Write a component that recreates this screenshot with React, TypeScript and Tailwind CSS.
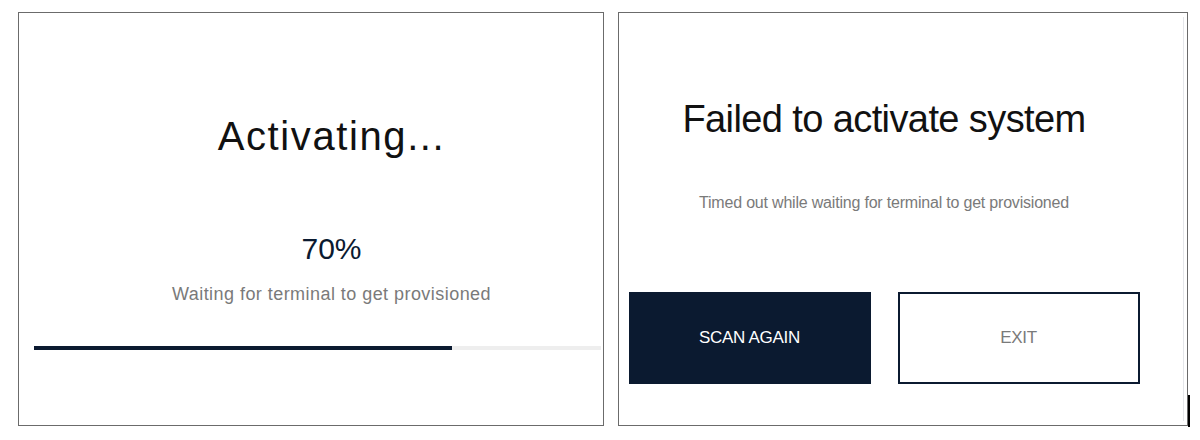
import React from 'react';

const font = { fontFamily: '"Liberation Sans", Arial, sans-serif' };

// Progress screen
const ActivatingPanel: React.FC<{ percent: number; fill: number }> = ({ percent, fill }) => {
  return (
    <div className="w-[586px] h-[414px] border border-[#6b6b6b] bg-white flex flex-col">
      <div className="pl-[41px] flex flex-col items-center">
        <h1 className="mt-[103px] text-[40px] leading-[40px] tracking-[1.6px] text-[#111]">Activating...</h1>
        <div className="mt-[78px] text-[30px] leading-[30px] text-[#0b1a30]">{percent}%</div>
        <p className="mt-[21px] text-[18px] leading-[18px] tracking-[0.45px] text-[#7a7a7a]">
          Waiting for terminal to get provisioned
        </p>
      </div>
      <div className="mt-[43px] ml-[15px] mr-[2px] h-[4px] bg-[#eeeeee] flex">
        <div className="h-full bg-[#0b1a30]" style={{ width: `${fill}%` }} />
      </div>
    </div>
  );
};

// Error screen
const FailedPanel: React.FC = () => {
  return (
    <div className="relative w-[570px] h-[414px] border border-[#6b6b6b] bg-white">
      <div className="pr-[38px] flex flex-col items-center">
        <h1 className="mt-[87px] text-[38px] leading-[38px] tracking-[-0.6px] text-[#111]">Failed to activate system</h1>
        <p className="mt-[57px] text-[16px] leading-[16px] tracking-[-0.2px] text-[#7a7a7a]">
          Timed out while waiting for terminal to get provisioned
        </p>
        <div className="mt-[81px] flex gap-[27px]">
          <button className="w-[242px] h-[92px] bg-[#0b1a30] text-white text-[17px] tracking-[-0.3px] flex items-center justify-center">
            SCAN AGAIN
          </button>
          <button className="w-[242px] h-[92px] bg-white border-2 border-[#0b1a30] text-[#7a7a7a] text-[17px] tracking-[-0.3px] flex items-center justify-center">
            EXIT
          </button>
        </div>
      </div>
      <span className="absolute right-[-3px] bottom-[-2px] w-[2px] h-[32px] bg-black" />
      <span className="absolute right-[3px] top-[4px] bottom-[4px] w-px bg-[#e4e6ea]" />
    </div>
  );
};

export default function App() {
  return (
    <div className="w-[1200px] h-[440px] bg-white flex gap-[14px] pl-[18px] pt-[12px]" style={font}>
      <ActivatingPanel percent={70} fill={73.7} />
      <FailedPanel />
    </div>
  );
}
